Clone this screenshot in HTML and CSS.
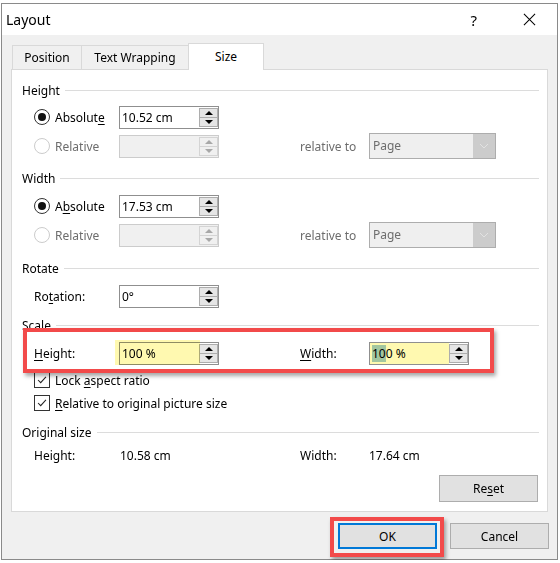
FILE: index.html
```html
<!DOCTYPE html>
<html>
<head>
<meta charset="utf-8">
<link rel="stylesheet" href="styles.css">
</head>
<body>
<div class="dialog">
  <div class="titlebar">
    <span class="title">Layout</span>
    <span class="help">?</span>
    <svg class="close" viewBox="0 0 14 14"><path d="M1 1L13 13M13 1L1 13" stroke="#000" stroke-width="1.1" fill="none"/></svg>
  </div>
  <div class="body">
    <div class="tabs">
      <div class="tab pos">Position</div>
      <div class="tab wrap">Text Wrapping</div>
      <div class="tab size">Size</div>
    </div>
    <div class="panel">
      <div class="heading"><span>Height</span><i class="rule"></i></div>
      <div class="row mt7">
        <label class="radio"><span class="rb on"></span><span>Absolut<u>e</u></span></label>
        <div class="field"><span class="val">10.52 cm</span><span class="spin"><span class="sb up"></span><span class="sb dn"></span></span></div>
      </div>
      <div class="row mt5">
        <label class="radio dis"><span class="rb"></span><span>Relative</span></label>
        <div class="field dis"><span class="val"></span><span class="spin"><span class="sb up"></span><span class="sb dn"></span></span></div>
        <span></span>
        <span class="dtext">relative to</span>
        <div class="combo"><span class="ctext">Page</span><span class="carrow"><svg viewBox="0 0 10 6" width="10" height="6"><path d="M1 1L5 5L9 1" stroke="#e2e2e2" fill="none"/></svg></span></div>
      </div>

      <div class="heading mt12"><span>Width</span><i class="rule"></i></div>
      <div class="row mt8">
        <label class="radio"><span class="rb on"></span><span>A<u>b</u>solute</span></label>
        <div class="field"><span class="val">17.53 cm</span><span class="spin"><span class="sb up"></span><span class="sb dn"></span></span></div>
      </div>
      <div class="row mt5">
        <label class="radio dis"><span class="rb"></span><span>Relative</span></label>
        <div class="field dis"><span class="val"></span><span class="spin"><span class="sb up"></span><span class="sb dn"></span></span></div>
        <span></span>
        <span class="dtext">relative to</span>
        <div class="combo"><span class="ctext">Page</span><span class="carrow"><svg viewBox="0 0 10 6" width="10" height="6"><path d="M1 1L5 5L9 1" stroke="#e2e2e2" fill="none"/></svg></span></div>
      </div>

      <div class="heading mt13"><span>Rotate</span><i class="rule"></i></div>
      <div class="row mt8">
        <span>Ro<u>t</u>ation:</span>
        <div class="field"><span class="val">0°</span><span class="spin"><span class="sb up"></span><span class="sb dn"></span></span></div>
      </div>

      <div class="heading mt9"><span>Scale</span><i class="rule"></i></div>
      <div class="row scale mt8">
        <span><u>H</u>eight:</span>
        <div class="field"><span class="val">100 %</span><span class="spin"><span class="sb up"></span><span class="sb dn"></span></span><span class="marker"></span></div>
        <span></span>
        <span><u>W</u>idth:</span>
        <div class="field"><span class="val yellow"><span class="sel">10</span>0 %</span><span class="spin"><span class="sb up"></span><span class="sb dn"></span></span></div>
        <span class="redbox scalebox"></span>
      </div>
      <label class="check mt7"><span class="cb"><svg viewBox="0 0 16 16"><path d="M3.5 8L6.5 11L12.5 4.5" stroke="#222" stroke-width="1.2" fill="none"/></svg></span><span>Lock <u>a</u>spect ratio</span></label>
      <label class="check mt7"><span class="cb"><svg viewBox="0 0 16 16"><path d="M3.5 8L6.5 11L12.5 4.5" stroke="#222" stroke-width="1.2" fill="none"/></svg></span><span><u>R</u>elative to original picture size</span></label>

      <div class="heading mt13"><span>Original size</span><i class="rule"></i></div>
      <div class="row orig mt7">
        <span>Height:</span>
        <span class="oval">10.58 cm</span>
        <span></span>
        <span>Width:</span>
        <span>17.64 cm</span>
      </div>
      <div class="resetrow">
        <button class="btn reset">Re<u>s</u>et</button>
      </div>
    </div>
    <div class="buttons">
      <div class="okwrap">
        <button class="btn ok">OK</button>
        <span class="redbox okbox"></span>
      </div>
      <button class="btn">Cancel</button>
    </div>
  </div>
</div>
</body>
</html>
```
FILE: styles.css
```css
* { box-sizing: border-box; }
html, body { margin: 0; background: #fff; }
body {
  font-family: "Noto Sans", "Liberation Sans", sans-serif;
  font-size: 12px;
  color: #000;
  padding-top: 3px;
}
u { text-decoration-thickness: 1px; text-underline-offset: 2px; }

.dialog {
  margin-left: 1px;
  width: 557px;
  height: 557px;
  border: 1px solid #8a8a8a;
  background: #f0f0f0;
}
.titlebar {
  height: 31px;
  background: #fff;
  display: flex;
  align-items: center;
  padding: 0 21px 0 4px;
}
.title { font-size: 14px; }
.help { margin-left: auto; font-size: 15px; }
.close { margin-left: 46px; width: 13px; height: 13px; }

.body { padding: 0 9px; }

.tabs {
  display: flex;
  align-items: flex-end;
  height: 26px;
  margin-top: 8px;
  padding-left: 1px;
}
.tab {
  height: 24px;
  border: 1px solid #d9d9d9;
  border-bottom: 0;
  display: flex;
  align-items: center;
  justify-content: center;
  background: #f0f0f0;
}
.tab + .tab { margin-left: -1px; }
.tab.pos { width: 70px; }
.tab.wrap { width: 108px; }
.tab.size {
  width: 76px;
  height: 27px;
  margin-bottom: -1px;
  padding-bottom: 2px;
  background: #fff;
  position: relative;
  z-index: 1;
}

.panel {
  position: relative;
  background: #fff;
  border: 1px solid #d9d9d9;
  height: 443px;
  padding: 12px 8px 0 10px;
}

.heading {
  display: flex;
  align-items: center;
  height: 16px;
  gap: 5px;
}
.heading .rule { flex: 1; height: 1px; background: #dcdcdc; }

.mt5 { margin-top: 5px; }
.mt7 { margin-top: 7px; }
.mt8 { margin-top: 8px; }
.mt9 { margin-top: 9px; }
.mt12 { margin-top: 12px; }
.mt13 { margin-top: 13px; }

.row {
  display: grid;
  grid-template-columns: 85px 100px 81px 69px 127px;
  grid-template-rows: 24px;
  align-items: center;
  height: 24px;
  padding-left: 12px;
  position: relative;
}

.radio { display: flex; align-items: center; gap: 5px; }
.radio.dis { color: #6d6d6d; }
.rb {
  width: 16px; height: 16px;
  border: 1px solid #333;
  border-radius: 50%;
  display: flex; align-items: center; justify-content: center;
  background: #fff;
}
.rb.on::after {
  content: "";
  width: 8px; height: 8px;
  border-radius: 50%;
  background: #111;
}
.radio.dis .rb { border-color: #cccccc; }

.field {
  width: 100px;
  height: 23px;
  border: 1px solid #8f8f8f;
  display: flex;
  background: #fff;
  position: relative;
}
.field.dis { border-color: #cccccc; background: #f0f0f0; }
.val { flex: 1; padding-left: 2px; line-height: 21px; white-space: nowrap; }
.val.yellow { background: #fff9b0; }
.sel { background: #a3c69f; }
.spin {
  width: 19px;
  display: flex;
  flex-direction: column;
  padding: 1px 0;
}
.sb {
  flex: 1;
  border: 1px solid #adadad;
  background: #e5e5e5;
  display: flex;
  align-items: center;
  justify-content: center;
}
.sb + .sb { margin-top: -1px; }
.sb.up::after {
  content: "";
  border-left: 4px solid transparent;
  border-right: 4px solid transparent;
  border-bottom: 4px solid #000;
}
.sb.dn::after {
  content: "";
  border-left: 4px solid transparent;
  border-right: 4px solid transparent;
  border-top: 4px solid #000;
}
.field.dis .sb { border-color: #d4d4d4; background: #f0f0f0; }
.field.dis .sb.up::after { border-bottom-color: #a8a8a8; }
.field.dis .sb.dn::after { border-top-color: #a8a8a8; }

.marker {
  position: absolute;
  left: -5px;
  top: -3px;
  width: 85px;
  height: 25px;
  background: #fff9b0;
  mix-blend-mode: multiply;
  pointer-events: none;
}

.dtext { color: #6d6d6d; }
.combo {
  width: 127px;
  height: 26px;
  border: 1px solid #adadad;
  background: #efefef;
  display: flex;
}
.ctext { flex: 1; padding-left: 3px; line-height: 24px; color: #6d6d6d; }
.carrow {
  width: 22px;
  background: #cccccc;
  display: flex;
  align-items: center;
  justify-content: center;
}

.check {
  display: flex;
  align-items: center;
  gap: 5px;
  height: 16px;
  padding-left: 12px;
}
.cb {
  width: 16px; height: 16px;
  border: 1px solid #333;
  background: #fff;
  display: flex;
}
.cb svg { width: 14px; height: 14px; }

.orig { height: 16px; grid-template-rows: 16px; }
.oval { padding-left: 1px; }

.resetrow {
  display: flex;
  justify-content: flex-end;
  margin-top: 12px;
  padding-right: 1px;
}
.btn {
  font-family: inherit;
  font-size: 12px;
  color: #000;
  width: 99px;
  height: 26px;
  border: 1px solid #adadad;
  background: #e1e1e1;
  padding: 0;
}
.btn.reset { height: 27px; }
.btn.ok { border: 2px solid #0078d7; }

.buttons {
  display: flex;
  justify-content: flex-end;
  gap: 13px;
  margin-top: 11px;
  margin-right: -1px;
}
.okwrap { position: relative; display: flex; }

.redbox {
  position: absolute;
  border: 4px solid #f24a4a;
  box-shadow: 2px 3px 4px rgba(0, 0, 0, 0.35);
  pointer-events: none;
}
.scalebox { left: 1px; top: -13px; width: 471px; height: 45px; }
.okbox { left: -8px; top: -6px; width: 114px; height: 40px; }
```
